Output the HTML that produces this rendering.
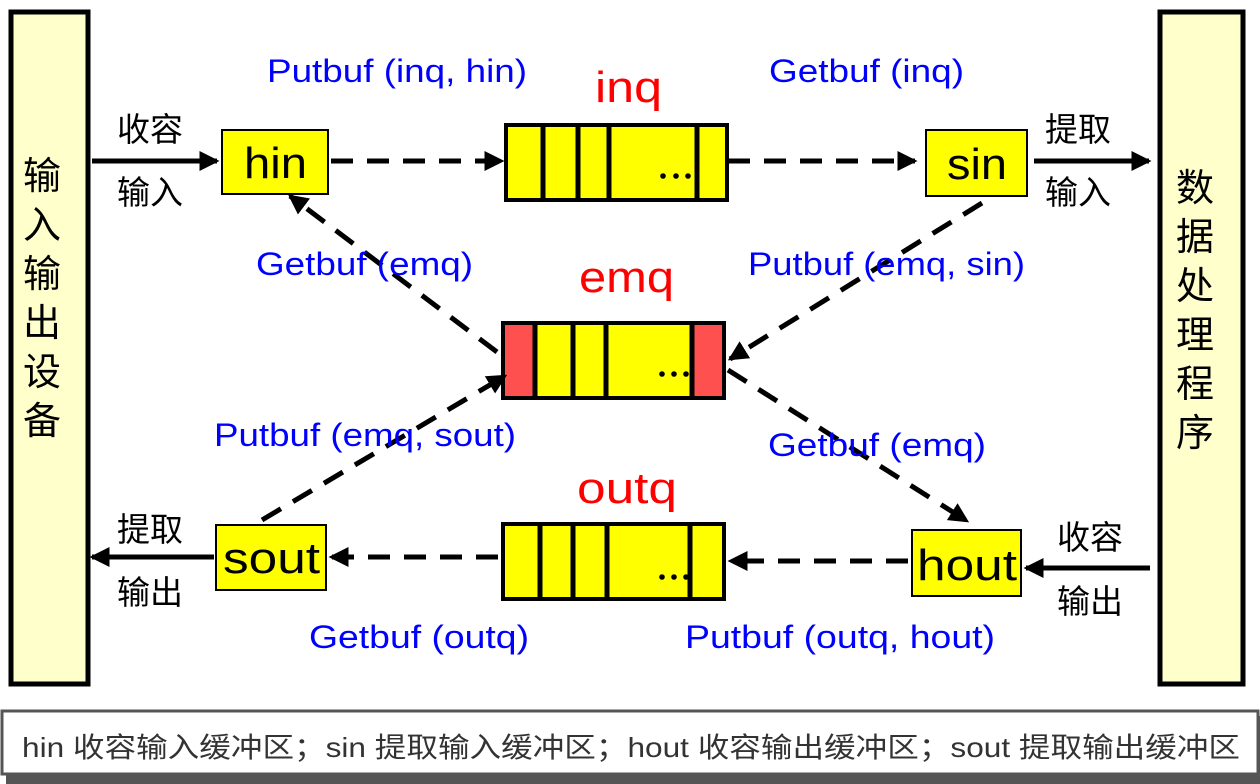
<!DOCTYPE html>
<html><head><meta charset="utf-8"><style>
body{margin:0;background:#fff;width:1260px;height:784px;overflow:hidden}
svg{display:block}
.b{fill:#0000ff;font-family:"Liberation Sans","Noto Sans CJK SC",sans-serif;font-size:32px}
.r{fill:#ff0000;font-family:"Liberation Sans",sans-serif;font-size:44px}
.k{fill:#000;font-family:"Liberation Sans","Noto Sans CJK SC",sans-serif}
.d{stroke:#000;stroke-width:5;stroke-dasharray:22 14;fill:none}
.s{stroke:#000;stroke-width:5;fill:none}
</style></head><body>
<svg width="1260" height="784" viewBox="0 0 1260 784">
<defs><marker id="a" markerWidth="4" markerHeight="4" refX="3.5" refY="2" orient="auto" markerUnits="strokeWidth"><path d="M0,0 L4,2 L0,4z" fill="#000"/></marker></defs>
<rect x="11" y="12" width="77" height="672" fill="#ffffcc" stroke="#000" stroke-width="5"/>
<rect x="1160" y="12" width="83" height="672" fill="#ffffcc" stroke="#000" stroke-width="5"/>
<g class="k" font-size="38" text-anchor="middle">
<text x="42" y="189">输</text><text x="42" y="238">入</text><text x="42" y="287">输</text><text x="42" y="336">出</text><text x="42" y="385">设</text><text x="42" y="434">备</text>
<text x="1195" y="201">数</text><text x="1195" y="250">据</text><text x="1195" y="299">处</text><text x="1195" y="348">理</text><text x="1195" y="397">程</text><text x="1195" y="446">序</text>
</g>
<rect x="222" y="130" width="106" height="64" fill="#ffff00" stroke="#000" stroke-width="2"/>
<rect x="926" y="130" width="101" height="66" fill="#ffff00" stroke="#000" stroke-width="2"/>
<rect x="216" y="525" width="110" height="65" fill="#ffff00" stroke="#000" stroke-width="2"/>
<rect x="912" y="530" width="109" height="66" fill="#ffff00" stroke="#000" stroke-width="2"/>
<g class="k" font-size="44">
<text x="244" y="178" textLength="63" lengthAdjust="spacingAndGlyphs">hin</text>
<text x="947" y="179" textLength="60" lengthAdjust="spacingAndGlyphs">sin</text>
<text x="223" y="573" textLength="97" lengthAdjust="spacingAndGlyphs">sout</text>
<text x="917" y="580" textLength="100" lengthAdjust="spacingAndGlyphs">hout</text>
</g>
<rect x="506" y="125" width="221" height="75" fill="#ffff00" stroke="#000" stroke-width="4"/>
<path d="M543 125V200M578 125V200M609 125V200M697 125V200" class="s" stroke-width="3"/>
<rect x="503" y="323" width="221" height="75" fill="#ffff00" stroke="#000" stroke-width="4"/>
<rect x="505" y="325" width="30" height="71" fill="#ff5050"/>
<rect x="692" y="325" width="30" height="71" fill="#ff5050"/>
<path d="M535 323V398M573 323V398M606 323V398M692 323V398" class="s" stroke-width="3"/>
<rect x="503" y="524" width="221" height="75" fill="#ffff00" stroke="#000" stroke-width="4"/>
<path d="M540 524V599M573 524V599M607 524V599M690 524V599" class="s" stroke-width="3"/>
<g fill="#000"><circle cx="663" cy="176" r="2.8"/><circle cx="676" cy="176" r="2.8"/><circle cx="688" cy="176" r="2.8"/>
<circle cx="662" cy="374" r="2.8"/><circle cx="674" cy="374" r="2.8"/><circle cx="686" cy="374" r="2.8"/>
<circle cx="662" cy="577" r="2.8"/><circle cx="674" cy="577" r="2.8"/><circle cx="686" cy="577" r="2.8"/></g>
<line x1="92" y1="161" x2="217" y2="161" class="s" marker-end="url(#a)"/>
<line x1="1034" y1="161" x2="1149" y2="161" class="s" marker-end="url(#a)"/>
<line x1="1150" y1="568" x2="1026" y2="568" class="s" marker-end="url(#a)"/>
<line x1="214" y1="557" x2="92" y2="557" class="s" marker-end="url(#a)"/>
<line x1="331" y1="161" x2="502" y2="161" class="d" marker-end="url(#a)"/>
<line x1="728" y1="161" x2="915" y2="161" class="d" marker-end="url(#a)"/>
<line x1="497" y1="352" x2="290" y2="196" class="d" marker-end="url(#a)"/>
<line x1="982" y1="203" x2="730" y2="359" class="d" marker-end="url(#a)"/>
<line x1="262" y1="520" x2="505" y2="376" class="d" marker-end="url(#a)"/>
<line x1="728" y1="370" x2="967" y2="521" class="d" marker-end="url(#a)"/>
<line x1="908" y1="561" x2="730" y2="561" class="d" marker-end="url(#a)"/>
<line x1="498" y1="557" x2="331" y2="557" class="d" marker-end="url(#a)"/>
<g class="k" font-size="33">
<text x="117" y="141">收容</text><text x="117" y="204">输入</text>
<text x="1045" y="141">提取</text><text x="1045" y="204">输入</text>
<text x="117" y="541">提取</text><text x="117" y="604">输出</text>
<text x="1057" y="549">收容</text><text x="1057" y="613">输出</text>
</g>
<text class="r" x="595" y="102" textLength="67" lengthAdjust="spacingAndGlyphs">inq</text>
<text class="r" x="579" y="292" textLength="95" lengthAdjust="spacingAndGlyphs">emq</text>
<text class="r" x="577" y="503" textLength="100" lengthAdjust="spacingAndGlyphs">outq</text>
<text class="b" x="267" y="82" textLength="260" lengthAdjust="spacingAndGlyphs">Putbuf (inq, hin)</text>
<text class="b" x="769" y="82" textLength="195" lengthAdjust="spacingAndGlyphs">Getbuf (inq)</text>
<text class="b" x="256" y="275" textLength="217" lengthAdjust="spacingAndGlyphs">Getbuf (emq)</text>
<text class="b" x="748" y="275" textLength="277" lengthAdjust="spacingAndGlyphs">Putbuf (emq, sin)</text>
<text class="b" x="214" y="446" textLength="302" lengthAdjust="spacingAndGlyphs">Putbuf (emq, sout)</text>
<text class="b" x="768" y="456" textLength="218" lengthAdjust="spacingAndGlyphs">Getbuf (emq)</text>
<text class="b" x="309" y="648" textLength="220" lengthAdjust="spacingAndGlyphs">Getbuf (outq)</text>
<text class="b" x="685" y="648" textLength="310" lengthAdjust="spacingAndGlyphs">Putbuf (outq, hout)</text>
<rect x="6" y="716" width="1254" height="68" fill="#555"/>
<rect x="2" y="711" width="1256" height="63" fill="#fff" stroke="#555" stroke-width="3"/>
<text x="22" y="757" class="k" font-size="28" style="fill:#333" textLength="1218" lengthAdjust="spacingAndGlyphs">hin 收容输入缓冲区；sin 提取输入缓冲区；hout 收容输出缓冲区；sout 提取输出缓冲区</text>
</svg>
</body></html>
